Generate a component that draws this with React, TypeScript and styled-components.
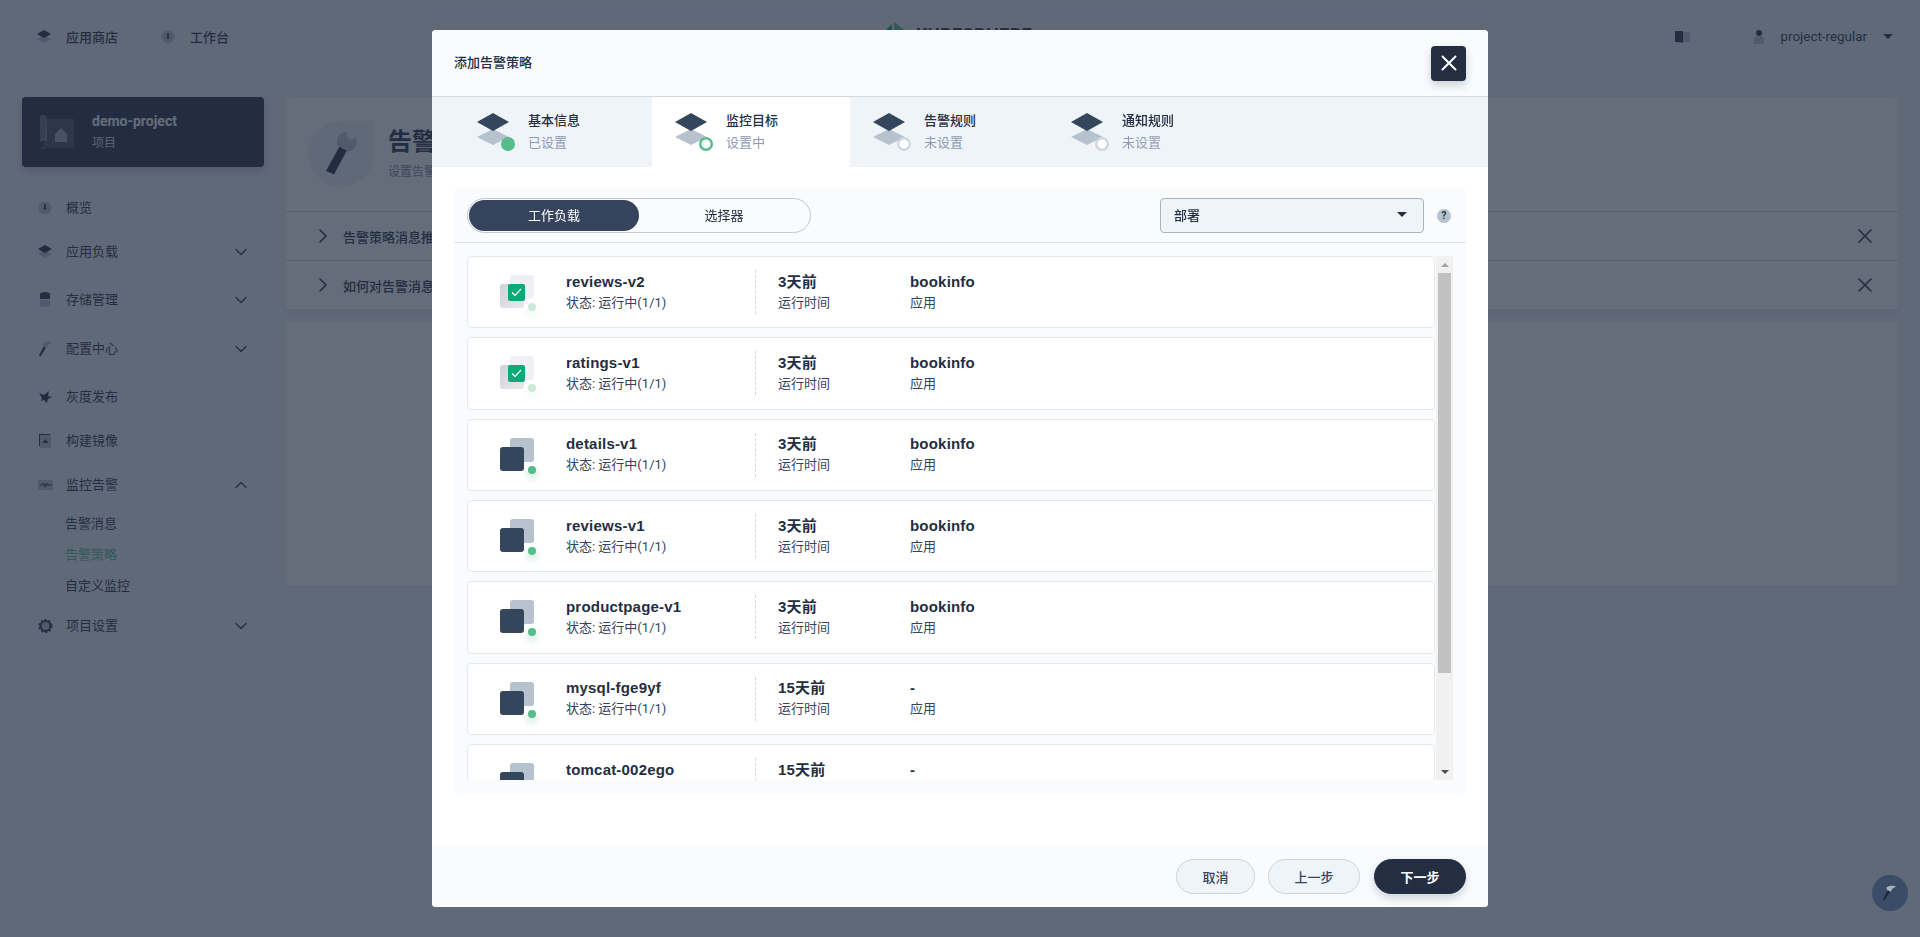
import React from "react"
import styled, { createGlobalStyle } from "styled-components"
import { ChevronDown, ChevronRight, ChevronUp, X } from "lucide-react"

const GlobalStyle = createGlobalStyle`
    html, body {
        margin: 0;
        padding: 0;
        height: 100%;
        overflow: hidden;
        background: #eff4f9;
    }
    body {
        font-family: Roboto, "Noto Sans CJK SC", sans-serif;
        font-size: 12px;
        color: #242e42;
    }
    * {
        box-sizing: border-box;
    }
`

const DARK = "#242e42"
const LIGHT = "#b6c2cd"

function LayerIcon() {
    return (
        <svg width="16" height="16" viewBox="0 0 16 16">
            <polygon points="0,10 7,6 14,10 7,14" fill={LIGHT} />
            <polygon points="0,5 7,1 14,5 7,9" fill={DARK} />
        </svg>
    )
}

function GaugeIcon() {
    return (
        <svg width="16" height="16" viewBox="0 0 16 16">
            <circle cx="7" cy="8" r="6.5" fill={LIGHT} />
            <path d="M7 4v4" stroke={DARK} strokeWidth="1.6" />
            <circle cx="7" cy="8.5" r="1.3" fill={DARK} />
        </svg>
    )
}

function DatabaseIcon() {
    return (
        <svg width="16" height="16" viewBox="0 0 16 16">
            <path d="M2 8h10v5c0 1-2 2-5 2s-5-1-5-2z" fill={LIGHT} />
            <path d="M2 2c0-1 2-2 5-2s5 1 5 2v5H2z" fill={DARK} />
        </svg>
    )
}

function HammerIcon({ head = LIGHT, handle = DARK }: { head?: string; handle?: string }) {
    return (
        <svg width="16" height="16" viewBox="0 0 16 16">
            <path d="M2.500 15.500 1 14.500 5.500 5.500l2.500 1.200z" fill={handle} />
            <path d="M4.500 2.500C7 .5 11 0 14.500 2c-2.500 0-4.500 1-5.500 4.500L5 5z" fill={head} />
        </svg>
    )
}

function BirdIcon() {
    return (
        <svg width="16" height="16" viewBox="0 0 16 16">
            <path d="M1 4l5 2 5-4-1 5 4 1-4 2-1 4-3-3-3 1 1-3z" fill={DARK} />
        </svg>
    )
}

function ImageIcon() {
    return (
        <svg width="16" height="16" viewBox="0 0 16 16">
            <path d="M1 1h11v1H2v11H1z" fill={DARK} />
            <rect x="2" y="2" width="11" height="13" fill={LIGHT} />
            <polygon points="7.500,6 10.500,10 4.500,10" fill={DARK} />
        </svg>
    )
}

function PulseIcon() {
    return (
        <svg width="16" height="16" viewBox="0 0 16 16">
            <rect x="0" y="3" width="15" height="10" rx="1" fill={LIGHT} />
            <path d="M1.500 8h3l1-2 1.500 4 1.500-4 1 3 1-1h3" fill="none" stroke={DARK} strokeWidth="1" />
        </svg>
    )
}

function GearIcon() {
    return (
        <svg width="16" height="16" viewBox="0 0 16 16">
            <circle cx="7.500" cy="8" r="5" fill={LIGHT} stroke={DARK} strokeWidth="2" />
            <circle cx="7.500" cy="8" r="6.300" fill="none" stroke={DARK} strokeWidth="1.600" strokeDasharray="2 2" />
        </svg>
    )
}

function BookIcon() {
    return (
        <svg width="16" height="12" viewBox="0 0 16 12">
            <path d="M8 1h7v10H8z" fill={LIGHT} />
            <path d="M0 0h8v11.500L0 11z" fill={DARK} />
        </svg>
    )
}

function UserIcon() {
    return (
        <svg width="12" height="14" viewBox="0 0 12 14">
            <circle cx="6" cy="3" r="3" fill={DARK} />
            <path d="M1 9c0-2 2-3 5-3s5 1 5 3v5H1z" fill={LIGHT} />
        </svg>
    )
}

function ProjectIcon() {
    return (
        <svg width="34" height="34" viewBox="0 0 34 34">
            <path d="M7 4h27v29H3z" fill="#b6c2cd" opacity=".22" />
            <path d="M0 3c0-2 1-3 3-3s4 1 4 3v24c-1-2-6-2-7 1v2c0 2 1 3 3 3h2v1H3c-2 0-3-1-3-3z" fill="#ffffff" opacity=".3" />
            <path d="M15 19l6-6 6 6v8H15z" fill="#ffffff" opacity=".5" />
        </svg>
    )
}

function BannerIcon() {
    return (
        <svg width="66" height="66" viewBox="0 0 66 66">
            <path d="M33 0h33v33a33 33 0 1 1-33-33z" fill="#eff4f9" />
            <circle cx="38.700" cy="20.700" r="10" fill={LIGHT} />
            <circle cx="43" cy="14" r="4.500" fill="#eff4f9" />
            <polygon points="18,50 26,53.500 38.700,29.700 31.300,25.700" fill={DARK} />
        </svg>
    )
}

type StepState = "done" | "active" | "pending"

function StepIcon({ state }: { state: StepState }) {
    return (
        <svg width="39" height="39" viewBox="0 0 39 39">
            <polygon points="0,24 16,16 32,24 16,32" fill="#b6c2cd" />
            <polygon points="0,9 16,0 32,9 16,18" fill="#34465c" />
            {state === "done" && <circle cx="31" cy="31" r="7" fill="#55bc8a" />}
            {state === "active" && <circle cx="31" cy="31" r="5.800" fill="#ffffff" stroke="#55bc8a" strokeWidth="2.400" />}
            {state === "pending" && <circle cx="31" cy="31" r="5.800" fill="#ffffff" stroke="#d1d7df" strokeWidth="2.400" />}
        </svg>
    )
}

function WorkloadIcon({ checked, id }: { checked: boolean; id: string }) {
    return (
        <svg width="60" height="60" viewBox="0 0 60 60">
            <defs>
                <linearGradient id={`front-${id}`} x1="0" y1="0" x2="1" y2="1">
                    <stop offset="0" stopColor="#cfd2d8" />
                    <stop offset="1" stopColor="#e8e9ec" />
                </linearGradient>
                <radialGradient id={`glow-${id}`}>
                    <stop offset="0" stopColor="#55bc8a" stopOpacity={checked ? ".08" : ".2"} />
                    <stop offset="1" stopColor="#55bc8a" stopOpacity="0" />
                </radialGradient>
            </defs>
            <rect x="20" y="8" width="24" height="24" rx="3" fill={checked ? "#eff0f3" : "#b6c2cd"} />
            <rect x="10" y="17" width="24" height="24" rx="3" fill={checked ? `url(#front-${id})` : "#34465c"} />
            {checked && (
                <g>
                    <rect x="18" y="17" width="17" height="17" rx="2" fill="#0aab77" />
                    <path d="M22 25.500l3 3 6-6.500" fill="none" stroke="#ffffff" strokeWidth="1.200" />
                </g>
            )}
            <circle cx="42" cy="44" r="10" fill={`url(#glow-${id})`} />
            <circle cx="42" cy="40" r="4" fill={checked ? "#cbead9" : "#55bc8a"} />
        </svg>
    )
}

const navItems = [
    { label: "概览", icon: <GaugeIcon />, gap: 12 },
    { label: "应用负载", icon: <LayerIcon />, arrow: "down", gap: 16 },
    { label: "存储管理", icon: <DatabaseIcon />, arrow: "down", gap: 17 },
    { label: "配置中心", icon: <HammerIcon />, arrow: "down", gap: 16 },
    { label: "灰度发布", icon: <BirdIcon />, gap: 12 },
    { label: "构建镜像", icon: <ImageIcon />, gap: 12 },
    { label: "监控告警", icon: <PulseIcon />, arrow: "up", gap: 7 },
]

const subItems = [
    { label: "告警消息", active: false },
    { label: "告警策略", active: true },
    { label: "自定义监控", active: false },
]

const steps: { title: string; sub: string; state: StepState }[] = [
    { title: "基本信息", sub: "已设置", state: "done" },
    { title: "监控目标", sub: "设置中", state: "active" },
    { title: "告警规则", sub: "未设置", state: "pending" },
    { title: "通知规则", sub: "未设置", state: "pending" },
]

const workloads = [
    { name: "reviews-v2", age: "3天前", app: "bookinfo", checked: true },
    { name: "ratings-v1", age: "3天前", app: "bookinfo", checked: true },
    { name: "details-v1", age: "3天前", app: "bookinfo", checked: false },
    { name: "reviews-v1", age: "3天前", app: "bookinfo", checked: false },
    { name: "productpage-v1", age: "3天前", app: "bookinfo", checked: false },
    { name: "mysql-fge9yf", age: "15天前", app: "-", checked: false },
    { name: "tomcat-002ego", age: "15天前", app: "-", checked: false },
]

export default function App() {
    return (
        <Page>
            <GlobalStyle />
            <TopBar>
                <TopLink>
                    <LayerIcon />
                    <span>应用商店</span>
                </TopLink>
                <TopLink>
                    <GaugeIcon />
                    <span>工作台</span>
                </TopLink>
                <Logo>
                    <svg width="26" height="30" viewBox="0 0 26 30">
                        <polygon points="12,0 24,9 24,30 12,30" fill="#55bc8a" />
                        <polygon points="0,12 10,2 10,30 0,30" fill="#00a971" />
                    </svg>
                    <LogoText>KUBESPHERE</LogoText>
                </Logo>
                <TopRight>
                    <BookIcon />
                    <UserBox>
                        <UserIcon />
                        <span>project-regular</span>
                        <Caret />
                    </UserBox>
                </TopRight>
            </TopBar>

            <Main>
                <Sidebar>
                    <ProjectCard>
                        <ProjectIcon />
                        <div>
                            <ProjectName>demo-project</ProjectName>
                            <ProjectType>项目</ProjectType>
                        </div>
                    </ProjectCard>
                    <Nav>
                        {navItems.map((item) => (
                            <NavItem key={item.label} $gap={item.gap}>
                                <NavIcon>{item.icon}</NavIcon>
                                <NavLabel>{item.label}</NavLabel>
                                {item.arrow === "down" && <ChevronDown size={20} strokeWidth={1.6} />}
                                {item.arrow === "up" && <ChevronUp size={20} strokeWidth={1.6} />}
                            </NavItem>
                        ))}
                        {subItems.map((item) => (
                            <SubItem key={item.label} $active={item.active}>
                                {item.label}
                            </SubItem>
                        ))}
                        <NavItem $gap={0} $top={9}>
                            <NavIcon>
                                <GearIcon />
                            </NavIcon>
                            <NavLabel>项目设置</NavLabel>
                            <ChevronDown size={20} strokeWidth={1.6} />
                        </NavItem>
                    </Nav>
                </Sidebar>

                <Content>
                    <Card>
                        <Banner>
                            <BannerIcon />
                            <div>
                                <BannerTitle>告警策略</BannerTitle>
                                <BannerSub>设置告警策略</BannerSub>
                            </div>
                        </Banner>
                        <TipRow>
                            <ChevronRight size={24} strokeWidth={1.6} />
                            <TipText>告警策略消息推送规则</TipText>
                            <X size={24} strokeWidth={1.6} />
                        </TipRow>
                        <TipRow>
                            <ChevronRight size={24} strokeWidth={1.6} />
                            <TipText>如何对告警消息进行处理</TipText>
                            <X size={24} strokeWidth={1.6} />
                        </TipRow>
                    </Card>
                    <EmptyCard />
                </Content>
            </Main>

            <Overlay>
                <Modal>
                    <ModalHeader>
                        <ModalTitle>添加告警策略</ModalTitle>
                        <CloseButton>
                            <X size={26} strokeWidth={1.8} color="#ffffff" />
                        </CloseButton>
                    </ModalHeader>
                    <Steps>
                        {steps.map((step) => (
                            <Step key={step.title} $active={step.state === "active"}>
                                <StepIcon state={step.state} />
                                <div>
                                    <StepTitle>{step.title}</StepTitle>
                                    <StepSub>{step.sub}</StepSub>
                                </div>
                            </Step>
                        ))}
                    </Steps>
                    <ModalBody>
                        <Panel>
                            <PanelTop>
                                <Toggle>
                                    <ToggleOption $active>工作负载</ToggleOption>
                                    <ToggleOption>选择器</ToggleOption>
                                </Toggle>
                                <Select>
                                    <span>部署</span>
                                    <Caret />
                                </Select>
                                <Help>?</Help>
                            </PanelTop>
                            <ListArea>
                                <List>
                                    {workloads.map((w) => (
                                        <Row key={w.name}>
                                            <RowIcon>
                                                <WorkloadIcon checked={w.checked} id={w.name} />
                                            </RowIcon>
                                            <NameCol>
                                                <Name>{w.name}</Name>
                                                <Meta>状态: 运行中(1/1)</Meta>
                                            </NameCol>
                                            <AgeCol>
                                                <Name>{w.age}</Name>
                                                <Meta>运行时间</Meta>
                                            </AgeCol>
                                            <div>
                                                <Name>{w.app}</Name>
                                                <Meta>应用</Meta>
                                            </div>
                                        </Row>
                                    ))}
                                </List>
                                <ScrollTrack>
                                    <ScrollArrow $up />
                                    <ScrollThumb />
                                    <ScrollSpace />
                                    <ScrollArrow />
                                </ScrollTrack>
                            </ListArea>
                        </Panel>
                    </ModalBody>
                    <ModalFooter>
                        <Button>取消</Button>
                        <Button $wide>上一步</Button>
                        <Button $wide $primary>下一步</Button>
                    </ModalFooter>
                </Modal>
            </Overlay>

            <FloatButton>
                <HammerIcon head="#aab5c3" handle="#1f2a3d" />
            </FloatButton>
        </Page>
    )
}

const Page = styled.div`
    position: relative;
    width: 100%;
    height: 937px;
    overflow: hidden;
    background-color: #eff4f9;
`
const TopBar = styled.header`
    position: relative;
    display: flex;
    align-items: center;
    height: 73px;
    padding: 0 27px 0 37px;
`
const TopLink = styled.div`
    display: flex;
    align-items: center;
    gap: 13px;
    margin-right: 43px;
    font-size: 13px;
    font-weight: 500;
`
const Logo = styled.div`
    position: absolute;
    left: 882px;
    top: 22px;
    display: flex;
    align-items: flex-start;
    gap: 8px;
`
const LogoText = styled.span`
    margin-top: 1px;
    font-size: 18px;
    line-height: 24px;
    font-weight: 700;
    letter-spacing: 0.4px;
    color: #242e42;
`
const TopRight = styled.div`
    display: flex;
    align-items: center;
    gap: 62px;
    margin-left: auto;
`
const UserBox = styled.div`
    display: flex;
    align-items: center;
    gap: 16px;
    font-size: 13.4px;
`
const Caret = styled.i`
    display: block;
    width: 0;
    height: 0;
    border-left: 5px solid transparent;
    border-right: 5px solid transparent;
    border-top: 5px solid #242e42;
    margin-left: auto;
`
const Main = styled.div`
    display: flex;
    gap: 22px;
    padding: 24px 22px 0;
`
const Sidebar = styled.aside`
    flex: 0 0 242px;
`
const ProjectCard = styled.div`
    display: flex;
    align-items: center;
    gap: 18px;
    height: 70px;
    padding: 0 18px;
    border-radius: 4px;
    background-color: #242e42;
    box-shadow: 0 4px 8px 0 rgba(36, 46, 66, 0.2);
`
const ProjectName = styled.div`
    font-size: 14px;
    line-height: 20px;
    font-weight: 700;
    color: #ffffff;
`
const ProjectType = styled.div`
    margin-top: 2px;
    font-size: 12px;
    line-height: 20px;
    color: #d8dee5;
`
const Nav = styled.nav`
    margin-top: 25px;
`
const NavItem = styled.div<{ $gap: number; $top?: number }>`
    display: flex;
    align-items: center;
    height: 32px;
    margin-top: ${(p) => p.$top || 0}px;
    margin-bottom: ${(p) => p.$gap}px;
    padding: 0 13px 0 16px;
`
const NavIcon = styled.span`
    display: flex;
    width: 28px;
`
const NavLabel = styled.span`
    flex: 1;
    font-size: 13px;
    line-height: 20px;
`
const SubItem = styled.div<{ $active?: boolean }>`
    height: 31px;
    padding-left: 43px;
    font-size: 13px;
    line-height: 31px;
    color: ${(p) => (p.$active ? "#55bc8a" : "#242e42")};
`
const Content = styled.main`
    flex: 1;
    min-width: 0;
`
const Card = styled.section`
    border-radius: 4px;
    background-color: #ffffff;
    box-shadow: 0 4px 8px 0 rgba(36, 46, 66, 0.06);
`
const Banner = styled.div`
    display: flex;
    align-items: center;
    gap: 14px;
    height: 114px;
    padding: 0 22px;
`
const BannerTitle = styled.h1`
    margin: 0;
    font-size: 24px;
    line-height: 32px;
    font-weight: 700;
`
const BannerSub = styled.p`
    margin: 4px 0 0;
    font-size: 12px;
    line-height: 20px;
    color: #79879c;
`
const TipRow = styled.div`
    display: flex;
    align-items: center;
    gap: 8px;
    height: 49px;
    padding: 0 21px 0 25px;
    border-top: 1px solid #ccd3db;
`
const TipText = styled.span`
    flex: 1;
    font-size: 13px;
    font-weight: 500;
`
const EmptyCard = styled(Card)`
    height: 264px;
    margin-top: 13px;
`
const Overlay = styled.div`
    position: absolute;
    inset: 0;
    display: flex;
    justify-content: center;
    align-items: flex-start;
    padding-top: 30px;
    background-color: rgba(35, 45, 65, 0.7);
    backdrop-filter: blur(0.6px);
`
const Modal = styled.div`
    display: flex;
    flex-direction: column;
    width: 1056px;
    height: 877px;
    border-radius: 4px;
    overflow: hidden;
    background-color: #ffffff;
`
const ModalHeader = styled.div`
    display: flex;
    align-items: center;
    justify-content: space-between;
    height: 67px;
    padding: 0 22px;
    background-color: #f9fbfd;
    border-bottom: 1px solid #d3d8df;
`
const ModalTitle = styled.h2`
    margin: 0;
    font-size: 13px;
    line-height: 20px;
    font-weight: 500;
`
const CloseButton = styled.button`
    display: flex;
    align-items: center;
    justify-content: center;
    width: 35px;
    height: 35px;
    padding: 0;
    border: none;
    border-radius: 4px;
    background-color: #242e42;
    box-shadow: 0 4px 8px 0 rgba(36, 46, 66, 0.2);
`
const Steps = styled.div`
    display: flex;
    height: 70px;
    padding-left: 22px;
    background-color: #eff4f9;
`
const Step = styled.div<{ $active?: boolean }>`
    display: flex;
    align-items: center;
    gap: 12px;
    width: 198px;
    padding-left: 23px;
    background-color: ${(p) => (p.$active ? "#ffffff" : "transparent")};
`
const StepTitle = styled.div`
    font-size: 13px;
    line-height: 20px;
    font-weight: 500;
`
const StepSub = styled.div`
    margin-top: 2px;
    font-size: 13px;
    line-height: 20px;
    color: #8f9bb3;
`
const ModalBody = styled.div`
    flex: 1;
    padding: 21px 22px 0;
`
const Panel = styled.div`
    height: 605px;
    padding: 0 13px 13px;
    border-radius: 4px;
    background-color: #f9fbfd;
`
const PanelTop = styled.div`
    display: flex;
    align-items: center;
    height: 55px;
    margin: 0 -13px;
    padding: 10px 15px 9px 13px;
    border-bottom: 1px solid #dde2e8;
`
const Toggle = styled.div`
    display: flex;
    width: 344px;
    height: 35px;
    padding: 1px;
    border: 1px solid #c1c9d1;
    border-radius: 18px;
`
const ToggleOption = styled.div<{ $active?: boolean }>`
    flex: 1;
    border-radius: 16px;
    font-size: 13px;
    line-height: 31px;
    text-align: center;
    color: ${(p) => (p.$active ? "#ffffff" : "#242e42")};
    background-color: ${(p) => (p.$active ? "#36435c" : "transparent")};
`
const Select = styled.div`
    display: flex;
    align-items: center;
    width: 264px;
    height: 35px;
    margin-left: auto;
    padding: 0 16px 2px 13px;
    border: 1px solid #abb4be;
    border-radius: 4px;
    font-size: 13px;
    font-weight: 500;
    background-color: #eff4f9;
`
const Help = styled.span`
    flex: 0 0 14px;
    height: 14px;
    margin-left: 13px;
    border-radius: 50%;
    font-size: 10px;
    font-weight: 700;
    line-height: 14px;
    text-align: center;
    background-color: #b6c2cd;
`
const ListArea = styled.div`
    display: flex;
    gap: 1px;
    height: 524px;
    margin-top: 13px;
    overflow: hidden;
`
const List = styled.div`
    flex: 1;
    display: flex;
    flex-direction: column;
    gap: 9px;
`
const Row = styled.div`
    flex: 0 0 72.33px;
    display: flex;
    align-items: center;
    padding-left: 98px;
    position: relative;
    border: 1px solid #e3e9ef;
    border-radius: 4px;
    background-color: #ffffff;
`
const RowIcon = styled.span`
    position: absolute;
    left: 22px;
    top: 10px;
    display: flex;
`
const NameCol = styled.div`
    width: 189px;
`
const AgeCol = styled.div`
    width: 155px;
    height: 44px;
    padding-left: 22px;
    border-left: 1px dashed #d1d7df;
    display: flex;
    flex-direction: column;
    justify-content: center;
`
const Name = styled.div`
    font-family: "Liberation Sans", "Noto Sans CJK SC", sans-serif;
    font-size: 15px;
    line-height: 20px;
    font-weight: 700;
    letter-spacing: 0.2px;
`
const Meta = styled.div`
    margin-top: 1px;
    font-size: 13px;
    line-height: 20px;
    color: #36435c;
`
const ScrollTrack = styled.div`
    flex: 0 0 17px;
    display: flex;
    flex-direction: column;
    background-color: #f1f1f1;
`
const ScrollArrow = styled.div<{ $up?: boolean }>`
    flex: 0 0 17px;
    display: flex;
    align-items: center;
    justify-content: center;
    &::after {
        content: "";
        border-left: 4px solid transparent;
        border-right: 4px solid transparent;
        border-bottom: ${(p) => (p.$up ? "4px solid #a3a3a3" : "none")};
        border-top: ${(p) => (p.$up ? "none" : "4px solid #505050")};
    }
`
const ScrollThumb = styled.div`
    flex: 0 0 400px;
    margin: 0 2px;
    background-color: #c1c1c1;
`
const ScrollSpace = styled.div`
    flex: 1;
`
const ModalFooter = styled.div`
    display: flex;
    align-items: center;
    justify-content: flex-end;
    gap: 14px;
    height: 61px;
    padding: 0 22px 1px;
    background-color: #f9fbfd;
`
const Button = styled.button<{ $wide?: boolean; $primary?: boolean }>`
    width: ${(p) => (p.$wide ? "92px" : "79px")};
    height: 35px;
    padding: 0;
    border: 1px solid ${(p) => (p.$primary ? "#242e42" : "#ccd3db")};
    border-radius: 18px;
    font-family: inherit;
    font-size: 13px;
    font-weight: ${(p) => (p.$primary ? 700 : 500)};
    color: ${(p) => (p.$primary ? "#ffffff" : "#36435c")};
    background-color: ${(p) => (p.$primary ? "#242e42" : "#eff4f9")};
    box-shadow: ${(p) => (p.$primary ? "0 4px 8px 0 rgba(36, 46, 66, 0.2)" : "none")};
    &:first-child {
        margin-right: -1px;
    }
`
const FloatButton = styled.div`
    position: absolute;
    right: 12px;
    bottom: 26px;
    display: flex;
    align-items: center;
    justify-content: center;
    width: 36px;
    height: 36px;
    border-radius: 50%;
    background-color: #3a4c68;
`
